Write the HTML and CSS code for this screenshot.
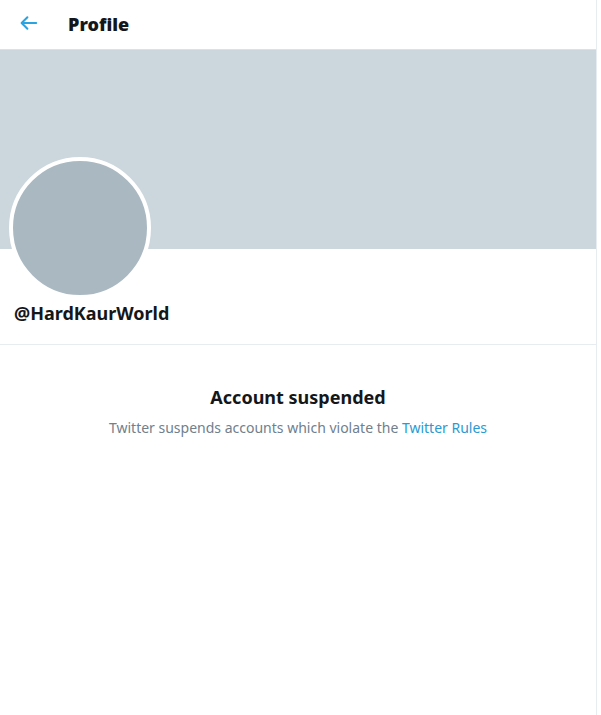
FILE: index.html
```html
<!DOCTYPE html>
<html lang="en">
<head>
    <meta charset="UTF-8">
    <meta name="viewport" content="width=device-width, initial-scale=1.0">
    <title>Profile</title>
    <link rel="stylesheet" href="styles.css">
</head>
<body>
    <main class="column">
        <header class="topbar">
            <button type="button" class="back-btn" aria-label="Back">
                <svg viewBox="0 0 18 16" width="18" height="16">
                    <path d="M16.200 8H1.800M7.400 2.200L1.600 8l5.800 5.800" />
                </svg>
            </button>
            <h1>Profile</h1>
        </header>

        <section class="profile">
            <div class="cover"></div>
            <div class="avatar"></div>
            <h2 class="username">@HardKaurWorld</h2>
        </section>

        <section class="notice">
            <h2>Account suspended</h2>
            <p>Twitter suspends accounts which violate the <a href="#">Twitter Rules</a></p>
        </section>
    </main>
</body>
</html>
```
FILE: styles.css
```css
* {
    box-sizing: border-box;
}

body {
    margin: 0;
    padding-right: 4px;
    background-color: #fff;
    color: #14171a;
    font-family: "Noto Sans", sans-serif;
}

h1, h2, p {
    margin: 0;
}

.column {
    min-height: 100vh;
    border-right: 1px solid #e6ecf0;
}

.topbar {
    display: flex;
    align-items: center;
    gap: 30px;
    height: 50px;
    padding: 0 20px 2px;
    border-bottom: 1px solid #dae2e7;
}

.topbar h1 {
    font-size: 18px;
    font-weight: 900;
    line-height: 24px;
}

.back-btn {
    display: flex;
    padding: 0 0 2px;
    border: none;
    background: none;
    cursor: pointer;
}

.back-btn svg {
    fill: none;
    stroke: #2aa3e0;
    stroke-width: 2;
    stroke-linecap: round;
    stroke-linejoin: round;
}

.profile {
    border-bottom: 1px solid #e6ecf0;
}

.cover {
    height: 199px;
    background-color: #ccd6dd;
}

.avatar {
    position: relative;
    width: 142px;
    height: 142px;
    margin: -92px 0 0 9px;
    border: 4px solid #fff;
    border-radius: 50%;
    background-color: #aab8c2;
}

.username {
    padding: 2px 14px 19px;
    font-size: 18px;
    line-height: 24px;
}

.notice {
    padding: 40px 20px;
    text-align: center;
}

.notice h2 {
    font-size: 18px;
    line-height: 24px;
}

.notice p {
    margin-top: 9px;
    color: #70808d;
    font-size: 14px;
    line-height: 20px;
}

.notice a {
    color: #2a9ad2;
    text-decoration: none;
}
```
